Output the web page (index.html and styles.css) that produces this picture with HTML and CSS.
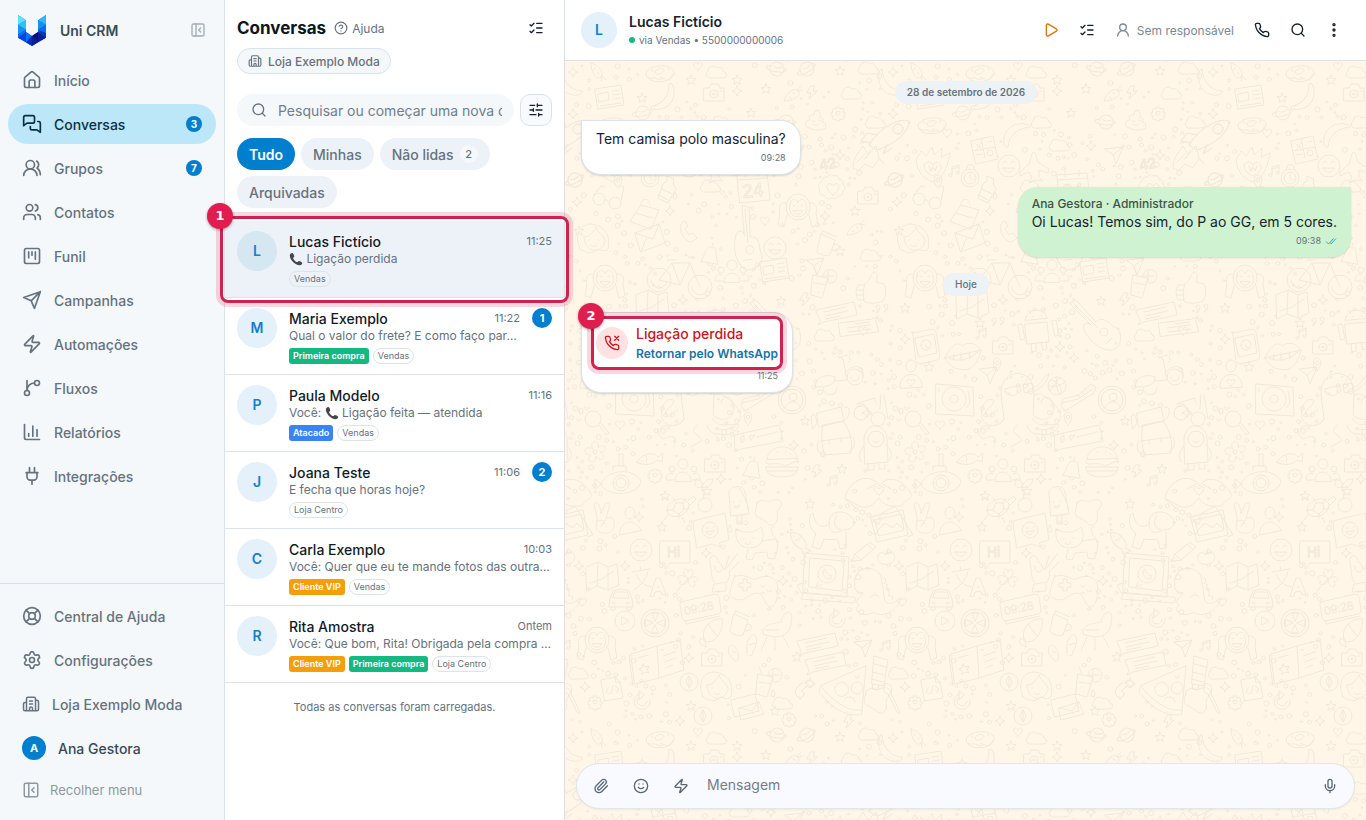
FILE: index.html
```
<!DOCTYPE html>
<html lang="pt-BR">
<head>
<meta charset="utf-8">
<meta name="viewport" content="width=device-width, initial-scale=1">
<title>Uni CRM</title>
<link rel="stylesheet" href="styles.css">
</head>
<body>
<svg class="sprite" aria-hidden="true">
  <symbol id="i-home" viewBox="0 0 24 24"><path d="M15.500 21v-7a2 2 0 0 0-2-2h-3a2 2 0 0 0-2 2v7"/><path d="M3 10a2 2 0 0 1 .709-1.528l7-5.999a2 2 0 0 1 2.582 0l7 5.999A2 2 0 0 1 21 10v9a2 2 0 0 1-2 2H5a2 2 0 0 1-2-2z"/></symbol>
  <symbol id="i-chats" viewBox="0 0 24 24"><path d="M15 9a2 2 0 0 1-2 2H6l-4 3V4a2 2 0 0 1 2-2h9a2 2 0 0 1 2 2z"/><path d="M19 9h1a2 2 0 0 1 2 2v11l-4-3h-6a2 2 0 0 1-2-2v-2"/></symbol>
  <symbol id="i-groups" viewBox="0 0 24 24"><path d="M18 21a8 8 0 0 0-16 0"/><circle cx="10" cy="8" r="5"/><path d="M22 20c0-3.370-2-6.500-4-8a5 5 0 0 0-.45-8.300"/></symbol>
  <symbol id="i-users" viewBox="0 0 24 24"><path d="M16 21v-2a4 4 0 0 0-4-4H6a4 4 0 0 0-4 4v2"/><circle cx="9" cy="7" r="4"/><path d="M22 21v-2a4 4 0 0 0-3-3.870M16 3.130a4 4 0 0 1 0 7.750"/></symbol>
  <symbol id="i-kanban" viewBox="0 0 24 24"><rect x="3" y="3" width="18" height="18" rx="2"/><path d="M8 7v7M12 7v4M16 7v9"/></symbol>
  <symbol id="i-send" viewBox="0 0 24 24"><path d="m22 2-7 20-4-9-9-4ZM22 2 11 13"/></symbol>
  <symbol id="i-zap" viewBox="0 0 24 24"><path d="M4 14a1 1 0 0 1-.78-1.630l9.900-10.200a.5.5 0 0 1 .86.46l-1.920 6.020A1 1 0 0 0 13 10h7a1 1 0 0 1 .78 1.630l-9.900 10.200a.5.5 0 0 1-.86-.46l1.920-6.020A1 1 0 0 0 11 14z"/></symbol>
  <symbol id="i-branch" viewBox="0 0 24 24"><path d="M6 3v12"/><circle cx="18" cy="6" r="3"/><circle cx="6" cy="18" r="3"/><path d="M15 6a9 9 0 0 0-9 9"/></symbol>
  <symbol id="i-chart" viewBox="0 0 24 24"><path d="M3 3v16a2 2 0 0 0 2 2h16M18 17V9M13 17V5M8 17v-3"/></symbol>
  <symbol id="i-plug" viewBox="0 0 24 24"><path d="M12 22v-5M9 8V2M15 8V2M5 8h14M18 8v5a4 4 0 0 1-4 4h-4a4 4 0 0 1-4-4V8Z"/></symbol>
  <symbol id="i-buoy" viewBox="0 0 24 24"><circle cx="12" cy="12" r="10"/><circle cx="12" cy="12" r="4"/><path d="m4.930 4.930 4.240 4.240M14.830 9.170l4.240-4.240M14.830 14.830l4.240 4.240M9.170 14.830l-4.240 4.240"/></symbol>
  <symbol id="i-gear" viewBox="0 0 24 24"><path d="M9.671 4.136a2.340 2.340 0 0 1 4.659 0 2.340 2.340 0 0 0 3.319 1.915 2.340 2.340 0 0 1 2.330 4.033 2.340 2.340 0 0 0 0 3.831 2.340 2.340 0 0 1-2.330 4.033 2.340 2.340 0 0 0-3.319 1.915 2.340 2.340 0 0 1-4.659 0 2.340 2.340 0 0 0-3.320-1.915 2.340 2.340 0 0 1-2.330-4.033 2.340 2.340 0 0 0 0-3.831A2.340 2.340 0 0 1 6.350 6.051a2.340 2.340 0 0 0 3.319-1.915"/><circle cx="12" cy="12" r="3"/></symbol>
  <symbol id="i-store" viewBox="0 0 24 24"><path d="M10 12h4M10 8h4M14 21v-3a2 2 0 0 0-4 0v3M6 10H4a2 2 0 0 0-2 2v7a2 2 0 0 0 2 2h16a2 2 0 0 0 2-2V9a2 2 0 0 0-2-2h-2M6 21V5a2 2 0 0 1 2-2h8a2 2 0 0 1 2 2v16"/></symbol>
  <symbol id="i-panel" viewBox="0 0 24 24"><rect x="3" y="3" width="18" height="18" rx="2"/><path d="M9 3v18M16 15l-3-3 3-3"/></symbol>
  <symbol id="i-help" viewBox="0 0 24 24"><circle cx="12" cy="12" r="10"/><path d="M9.090 9a3 3 0 0 1 5.830 1c0 2-3 3-3 3M12 17h.01"/></symbol>
  <symbol id="i-checks" viewBox="0 0 24 24"><path d="M13 5h8M13 12h8M13 19h8M3 17l2 2 4-4M3 7l2 2 4-4"/></symbol>
  <symbol id="i-search" viewBox="0 0 24 24"><circle cx="11" cy="11" r="8"/><path d="m21 21-4.300-4.300"/></symbol>
  <symbol id="i-sliders" viewBox="0 0 24 24"><path d="M10 5H3M12 19H3M14 3v4M16 17v4M21 12h-9M21 19h-5M21 5h-7M8 10v4M8 12H3"/></symbol>
  <symbol id="i-play" viewBox="0 0 24 24"><path d="M5 5a2 2 0 0 1 3.008-1.728l11.997 6.998a2 2 0 0 1 .003 3.458l-12 7A2 2 0 0 1 5 19z"/></symbol>
  <symbol id="i-user" viewBox="0 0 24 24"><circle cx="12" cy="8" r="5"/><path d="M20 21a8 8 0 0 0-16 0"/></symbol>
  <symbol id="i-phone" viewBox="0 0 24 24"><path d="M22 16.920v3a2 2 0 0 1-2.180 2 19.790 19.790 0 0 1-8.630-3.070 19.500 19.500 0 0 1-6-6 19.790 19.790 0 0 1-3.070-8.670A2 2 0 0 1 4.110 2h3a2 2 0 0 1 2 1.720 12.840 12.840 0 0 0 .7 2.810 2 2 0 0 1-.45 2.110L8.090 9.910a16 16 0 0 0 6 6l1.270-1.270a2 2 0 0 1 2.110-.45 12.840 12.840 0 0 0 2.810.7A2 2 0 0 1 22 16.920z"/></symbol>
  <symbol id="i-missed" viewBox="0 0 24 24"><path d="M22 16.920v3a2 2 0 0 1-2.180 2 19.790 19.790 0 0 1-8.630-3.070 19.500 19.500 0 0 1-6-6 19.790 19.790 0 0 1-3.070-8.670A2 2 0 0 1 4.110 2h3a2 2 0 0 1 2 1.720 12.840 12.840 0 0 0 .7 2.810 2 2 0 0 1-.45 2.110L8.090 9.910a16 16 0 0 0 6 6l1.270-1.270a2 2 0 0 1 2.110-.45 12.840 12.840 0 0 0 2.810.7A2 2 0 0 1 22 16.920z"/><path d="m16 2 6 6M22 2l-6 6"/></symbol>
  <symbol id="i-dots" viewBox="0 0 24 24"><circle cx="12" cy="4" r="1"/><circle cx="12" cy="12" r="1"/><circle cx="12" cy="20" r="1"/></symbol>
  <symbol id="i-clip" viewBox="0 0 24 24"><path d="m16 6-8.414 8.586a2 2 0 0 0 2.829 2.829l8.414-8.586a4 4 0 1 0-5.657-5.657l-8.379 8.551a6 6 0 1 0 8.485 8.485l8.379-8.551"/></symbol>
  <symbol id="i-smile" viewBox="0 0 24 24"><circle cx="12" cy="12" r="10"/><path d="M8 14s1.500 2 4 2 4-2 4-2M9 9h.01M15 9h.01"/></symbol>
  <symbol id="i-mic" viewBox="0 0 24 24"><path d="M12 19v3M19 10v2a7 7 0 0 1-14 0v-2"/><rect x="9" y="2" width="6" height="13" rx="3"/></symbol>
  <symbol id="i-ticks" viewBox="0 0 24 16"><path d="m2 9 5 5L17 3M11 13l1 1L22 3"/></symbol>
  <symbol id="i-handset" viewBox="0 0 16 16"><path d="M1 3.500C1.500 1.800 3 .8 4 1.200c1 .5 2 2.800 2 3.800 0 .9-1.400 1.300-1.300 2 .2 1.400 3.100 4.300 4.600 4.500.8.1 1.100-1.200 2-1.200 1.100 0 3.200 1.200 3.700 2.100.4 1-.8 2.500-2.400 2.700C7.500 15.700.2 8.500 1 3.500Z"/></symbol>
</svg>

<div class="app">
  <aside class="sidebar">
    <div class="brand">
      <svg class="logo" viewBox="0 0 84 93" aria-hidden="true">
        <path fill="#0a5fe8" d="M0 0 24 16V51L42 63 60 51V16L84 0V68L42 93 0 68z"/>
        <path fill="#5ce1fb" d="M0 0 24 16 0 30z"/><path fill="#2cc3fa" d="M24 16v28L0 30z"/><path fill="#1592f5" d="M0 30 24 44 0 58z"/><path fill="#0b6cf0" d="M24 44v12L0 68V58z"/>
        <path fill="#0747d8" d="M24 51v31L0 68z"/><path fill="#0a73ff" d="m24 51 18 12-18 19z"/><path fill="#0a2bb4" d="M42 63v30L24 82z"/>
        <path fill="#0a1e96" d="M42 63v30l18-11z"/><path fill="#06107a" d="m60 51-18 12 18 19z"/><path fill="#0a1e9c" d="M60 51v31l24-14z"/><path fill="#0836b8" d="m60 51 24-7v24z"/>
        <path fill="#36b4f8" d="M84 0 60 16l24 14z"/><path fill="#1491f3" d="M60 16v28l24-14z"/><path fill="#0a6cf0" d="m60 44 24-14v24z"/>
      </svg>
      <span class="brand-name">Uni CRM</span>
      <button class="icon-btn collapse" aria-label="Recolher"><svg class="ic s16"><use href="#i-panel"/></svg></button>
    </div>
    <nav class="nav">
      <a class="nav-item" href="#"><svg class="ic s20"><use href="#i-home"/></svg><span>Início</span></a>
      <a class="nav-item active" href="#"><svg class="ic s20"><use href="#i-chats"/></svg><span>Conversas</span><b class="count">3</b></a>
      <a class="nav-item" href="#"><svg class="ic s20"><use href="#i-groups"/></svg><span>Grupos</span><b class="count">7</b></a>
      <a class="nav-item" href="#"><svg class="ic s20"><use href="#i-users"/></svg><span>Contatos</span></a>
      <a class="nav-item" href="#"><svg class="ic s20"><use href="#i-kanban"/></svg><span>Funil</span></a>
      <a class="nav-item" href="#"><svg class="ic s20"><use href="#i-send"/></svg><span>Campanhas</span></a>
      <a class="nav-item" href="#"><svg class="ic s20"><use href="#i-zap"/></svg><span>Automações</span></a>
      <a class="nav-item" href="#"><svg class="ic s20"><use href="#i-branch"/></svg><span>Fluxos</span></a>
      <a class="nav-item" href="#"><svg class="ic s20"><use href="#i-chart"/></svg><span>Relatórios</span></a>
      <a class="nav-item" href="#"><svg class="ic s20"><use href="#i-plug"/></svg><span>Integrações</span></a>
    </nav>
    <div class="nav nav-foot">
      <a class="nav-item" href="#"><svg class="ic s20"><use href="#i-buoy"/></svg><span>Central de Ajuda</span></a>
      <a class="nav-item" href="#"><svg class="ic s20"><use href="#i-gear"/></svg><span>Configurações</span></a>
      <button class="nav-item"><svg class="ic s18"><use href="#i-store"/></svg><span>Loja Exemplo Moda</span></button>
      <button class="nav-item me"><b class="me-avatar">A</b><span>Ana Gestora</span></button>
      <button class="nav-item small"><svg class="ic s18"><use href="#i-panel"/></svg><span>Recolher menu</span></button>
    </div>
  </aside>

  <section class="inbox">
    <header class="inbox-head">
      <div class="title-row">
        <h1>Conversas</h1>
        <a class="help" href="#"><svg class="ic s14"><use href="#i-help"/></svg>Ajuda</a>
        <button class="icon-btn dark" aria-label="Selecionar conversas"><svg class="ic s16"><use href="#i-checks"/></svg></button>
      </div>
      <button class="store"><svg class="ic s14"><use href="#i-store"/></svg>Loja Exemplo Moda</button>
      <div class="search-row">
        <label class="search"><svg class="ic s16"><use href="#i-search"/></svg><input type="text" aria-label="Pesquisar" placeholder="Pesquisar ou começar uma nova conversa"></label>
        <button class="filter" aria-label="Filtros"><svg class="ic s16"><use href="#i-sliders"/></svg></button>
      </div>
      <div class="chips">
        <button class="chip on">Tudo</button>
        <button class="chip">Minhas</button>
        <button class="chip">Não lidas<span class="chip-n">2</span></button>
        <button class="chip">Arquivadas</button>
      </div>
    </header>

    <div class="threads">
      <a class="thread selected" href="#">
        <span class="avatar">L</span>
        <span class="thread-main">
          <span class="line"><strong>Lucas Fictício</strong><time>11:25</time></span>
          <span class="preview"><svg class="handset"><use href="#i-handset"/></svg> Ligação perdida</span>
          <span class="tags"><span class="tag">Vendas</span></span>
        </span>
        <span class="mark" aria-hidden="true"><b>1</b></span>
      </a>
      <a class="thread" href="#">
        <span class="avatar">M</span>
        <span class="thread-main">
          <span class="line"><strong>Maria Exemplo</strong><time>11:22</time></span>
          <span class="preview">Qual o valor do frete? E como faço par…</span>
          <span class="tags"><span class="tag green">Primeira compra</span><span class="tag">Vendas</span></span>
        </span>
        <b class="unread">1</b>
      </a>
      <a class="thread" href="#">
        <span class="avatar">P</span>
        <span class="thread-main">
          <span class="line"><strong>Paula Modelo</strong><time>11:16</time></span>
          <span class="preview">Você: <svg class="handset"><use href="#i-handset"/></svg> Ligação feita — atendida</span>
          <span class="tags"><span class="tag blue">Atacado</span><span class="tag">Vendas</span></span>
        </span>
      </a>
      <a class="thread" href="#">
        <span class="avatar">J</span>
        <span class="thread-main">
          <span class="line"><strong>Joana Teste</strong><time>11:06</time></span>
          <span class="preview">E fecha que horas hoje?</span>
          <span class="tags"><span class="tag">Loja Centro</span></span>
        </span>
        <b class="unread">2</b>
      </a>
      <a class="thread" href="#">
        <span class="avatar">C</span>
        <span class="thread-main">
          <span class="line"><strong>Carla Exemplo</strong><time>10:03</time></span>
          <span class="preview">Você: Quer que eu te mande fotos das outra…</span>
          <span class="tags"><span class="tag amber">Cliente VIP</span><span class="tag">Vendas</span></span>
        </span>
      </a>
      <a class="thread" href="#">
        <span class="avatar">R</span>
        <span class="thread-main">
          <span class="line"><strong>Rita Amostra</strong><time>Ontem</time></span>
          <span class="preview">Você: Que bom, Rita! Obrigada pela compra …</span>
          <span class="tags"><span class="tag amber">Cliente VIP</span><span class="tag green">Primeira compra</span><span class="tag">Loja Centro</span></span>
        </span>
      </a>
    </div>
    <p class="list-end">Todas as conversas foram carregadas.</p>
  </section>

  <main class="chat">
    <header class="chat-head">
      <span class="avatar sm">L</span>
      <div class="who"><h2>Lucas Fictício</h2><p><i class="dot"></i>via Vendas • 5500000000006</p></div>
      <div class="actions">
        <button class="icon-btn orange" aria-label="Iniciar"><svg class="ic s16"><use href="#i-play"/></svg></button>
        <button class="icon-btn dark" aria-label="Tarefas"><svg class="ic s16"><use href="#i-checks"/></svg></button>
        <button class="assignee"><svg class="ic s16"><use href="#i-user"/></svg>Sem responsável</button>
        <button class="icon-btn dark" aria-label="Ligar"><svg class="ic s16"><use href="#i-phone"/></svg></button>
        <button class="icon-btn dark" aria-label="Buscar"><svg class="ic s16"><use href="#i-search"/></svg></button>
        <button class="icon-btn dark" aria-label="Mais opções"><svg class="ic s16 bold"><use href="#i-dots"/></svg></button>
      </div>
    </header>
    <div class="chat-body">
      <svg class="wallpaper" aria-hidden="true"><defs><pattern id="doodles" width="320" height="666" patternUnits="userSpaceOnUse"></pattern></defs><rect width="100%" height="100%" fill="url(#doodles)"/></svg>
      <div class="stream">
        <span class="day">28 de setembro de 2026</span>
        <article class="bubble in">
          <p>Tem camisa polo masculina?</p>
          <time>09:28</time>
        </article>
        <article class="bubble out">
          <h3>Ana Gestora · Administrador</h3>
          <p>Oi Lucas! Temos sim, do P ao GG, em 5 cores.</p>
          <time>09:38<svg class="ticks"><use href="#i-ticks"/></svg></time>
        </article>
        <span class="day light">Hoje</span>
        <article class="bubble in call-bubble">
          <div class="call">
            <span class="call-icon"><svg class="ic s16"><use href="#i-missed"/></svg></span>
            <div class="call-text"><strong>Ligação perdida</strong><a href="#">Retornar pelo WhatsApp</a></div>
            <span class="mark" aria-hidden="true"><b>2</b></span>
          </div>
          <time>11:25</time>
        </article>
      </div>
      <form class="composer">
        <button type="button" class="icon-btn" aria-label="Anexar"><svg class="ic s16"><use href="#i-clip"/></svg></button>
        <button type="button" class="icon-btn" aria-label="Emoji"><svg class="ic s16"><use href="#i-smile"/></svg></button>
        <button type="button" class="icon-btn" aria-label="Respostas rápidas"><svg class="ic s16"><use href="#i-zap"/></svg></button>
        <input type="text" aria-label="Mensagem" placeholder="Mensagem">
        <button type="button" class="icon-btn" aria-label="Gravar áudio"><svg class="ic s16"><use href="#i-mic"/></svg></button>
      </form>
    </div>
  </main>
</div>
<script src="wallpaper.js"></script>
</body>
</html>
```
FILE: styles.css
```
* { box-sizing: border-box; }
body {
  margin: 0;
  font-family: Inter, "Liberation Sans", sans-serif;
  font-size: 14px;
  color: #16232f;
  background: #fff;
}
h1, h2, h3, p { margin: 0; }
a { color: inherit; text-decoration: none; }
button { border: 0; background: none; padding: 0; font: inherit; color: inherit; cursor: pointer; }
input { font: inherit; border: 0; background: none; outline: 0; padding: 0; min-width: 0; }
.sprite { position: absolute; width: 0; height: 0; }
.ic { flex: none; fill: none; stroke: currentColor; stroke-width: 2; stroke-linecap: round; stroke-linejoin: round; }
.s14 { width: 14px; height: 14px; }
.s16 { width: 16px; height: 16px; }
.s18 { width: 18px; height: 18px; }
.s20 { width: 20px; height: 20px; }
.bold { stroke-width: 3; }

.app { display: grid; grid-template-columns: 225px 340px minmax(0, 1fr); height: 100vh; }

/* Sidebar */
.sidebar { display: flex; flex-direction: column; background: #f4f8fa; border-right: 1px solid #d8e2e8; color: #66727e; }
.brand { display: flex; align-items: center; height: 60px; padding: 0 18px; gap: 14px; }
.logo { width: 28px; height: 31px; }
.brand-name { font-weight: 600; color: #3d4a57; }
.icon-btn { display: grid; place-items: center; color: #5b6774; }
.collapse { margin-left: auto; color: #a3acb5; }
.nav { display: flex; flex-direction: column; gap: 4px; padding: 0 8px; }
.nav-item { display: flex; align-items: center; gap: 12px; height: 40px; padding: 0 14px; border-radius: 20px; font-weight: 500; }
.nav-item.active { background: #bce7f8; color: #0b3044; }
.count { margin-left: auto; width: 16px; height: 16px; border-radius: 50%; background: #007fce; color: #fff; font-size: 10px; line-height: 16px; text-align: center; }
.nav-foot { margin-top: auto; padding-top: 12px; padding-bottom: 12px; border-top: 1px solid #d5e0ea; }
.me { color: #3a4855; }
.me-avatar { width: 24px; height: 24px; border-radius: 50%; background: #007fce; color: #fff; font-size: 11px; line-height: 24px; text-align: center; }
.nav-item.small { height: 36px; gap: 10px; font-size: 13px; color: #8e98a2; font-weight: 400; }

/* Conversation list */
.inbox { display: flex; flex-direction: column; border-right: 1px solid #d8e2e8; min-width: 0; }
.inbox-head { padding: 16px 12px 13px; }
.title-row { display: flex; align-items: center; height: 24px; gap: 8px; }
h1 { font-size: 17px; line-height: 24px; font-weight: 700; color: #0d1620; }
.help { display: flex; align-items: center; gap: 4px; font-size: 12px; color: #66727e; margin-right: auto; }
.title-row .icon-btn { width: 32px; }
.dark { color: #16202b; }
.store { display: flex; align-items: center; gap: 6px; height: 26px; margin-top: 8px; padding: 0 10px; border: 1px solid #d6e3ea; border-radius: 13px; background: #f4f8fa; font-size: 12px; font-weight: 500; color: #66727e; }
.search-row { display: flex; gap: 6px; margin-top: 20px; }
.search { flex: 1; min-width: 0; display: flex; align-items: center; gap: 11px; height: 32px; padding: 0 12px 0 14px; border-radius: 16px; background: #f4f8fa; color: #66727e; }
.search input { flex: 1; }
input::placeholder { color: #737e8a; opacity: 1; }
.filter { width: 32px; height: 32px; display: grid; place-items: center; border: 1px solid #dbe2ec; border-radius: 10px; background: #f8faff; color: #16202b; }
.chips { display: flex; flex-wrap: wrap; gap: 6px; margin-top: 12px; }
.chip { display: flex; align-items: center; gap: 6px; height: 32px; padding: 0 12px; border-radius: 16px; background: #edf2f8; font-weight: 500; color: #66727e; }
.chip.on { background: #007fce; color: #fff; font-weight: 600; }
.chip-n { width: 18px; height: 18px; border-radius: 50%; background: #f6f9fc; font-size: 11px; line-height: 18px; }
.thread { position: relative; display: flex; gap: 12px; padding: 10px 12px 9px; border-bottom: 1px solid #dbe4ea; }
.thread.selected { background: #edf2f8; z-index: 2; }
.avatar { flex: none; width: 40px; height: 40px; border-radius: 50%; background: #e4f1fa; color: #1580c8; font-weight: 600; line-height: 40px; text-align: center; }
.selected .avatar { background: #d5e7f1; }
.avatar.sm { width: 36px; height: 36px; line-height: 36px; }
.thread-main { flex: 1; min-width: 0; display: flex; flex-direction: column; }
.line { display: flex; justify-content: space-between; align-items: center; height: 20px; }
.line strong { font-weight: 500; color: #0f1b26; }
time { font-size: 11px; color: #66727e; }
.preview { font-size: 12px; line-height: 16px; color: #66727e; white-space: nowrap; }
.handset { width: 14px; height: 14px; fill: #45484b; vertical-align: -3px; }
.tags { display: flex; gap: 4px; margin-top: 4px; }
.tag { height: 16px; padding: 0 4px; border: 1px solid #dbe4ea; border-radius: 8px; background: #fff; font-size: 9px; line-height: 14px; color: #66727e; }
.selected .tag { background: none; }
.tag.green, .tag.blue, .tag.amber { border: 0; border-radius: 3px; line-height: 16px; color: #fff; font-weight: 600; }
.tag.green { background: #13b981; }
.tag.blue { background: #3b82f6; }
.tag.amber { background: #f59e0b; }
.thread { min-height: 77px; }
.unread { flex: none; width: 20px; height: 20px; border-radius: 50%; background: #007fce; color: #fff; font-size: 11px; line-height: 20px; text-align: center; }
.list-end { padding: 16px 12px; font-size: 11px; line-height: 17px; text-align: center; color: #66727e; }

/* Step markers drawn over the element they point at */
.mark { position: absolute; inset: -5px; border: 3px solid #cf234f; border-radius: 8px; box-shadow: 0 0 0 4px rgba(225, 29, 82, .18); pointer-events: none; z-index: 3; }
.thread .mark { bottom: -6px; }
.mark b { position: absolute; top: -16px; left: -16px; width: 26px; height: 26px; border-radius: 50%; background: #e11d50; color: #fff; font: bold 13px/26px "DejaVu Sans", sans-serif; text-align: center; box-shadow: 0 1px 3px rgba(0, 0, 0, .35); }

/* Chat */
.chat { display: flex; flex-direction: column; min-width: 0; }
.chat-head { display: flex; align-items: center; gap: 12px; height: 61px; padding: 0 16px; border-bottom: 1px solid #dbe4ea; }
.who h2 { font-size: 14px; line-height: 20px; font-weight: 600; }
.who p { display: flex; align-items: center; gap: 4px; font-size: 10px; line-height: 16px; color: #66727e; }
.dot { width: 6px; height: 6px; border-radius: 50%; background: #13b981; }
.actions { display: flex; align-items: center; gap: 4px; margin-left: auto; }
.actions .icon-btn { width: 32px; height: 32px; }
.orange { color: #d9770c; }
.assignee { display: flex; align-items: center; gap: 6px; padding: 0 8px; font-size: 12px; color: #7c8894; }
.chat-body { position: relative; flex: 1; display: flex; flex-direction: column; background: #fff6e8; }
.wallpaper { position: absolute; inset: 0; width: 100%; height: 100%; }
.wallpaper text { font-family: "Liberation Sans", sans-serif; }
.stream { position: relative; flex: 1; display: flex; flex-direction: column; padding: 20px 15px 0 16px; }
.day { align-self: center; padding: 0 12px; border-radius: 12px; background: #edf2f6; font-size: 10px; line-height: 23px; font-weight: 600; color: #66727e; }
.day.light { font-weight: 500; margin: 16px 0; }
.bubble { display: flex; flex-direction: column; border-radius: 20px; padding: 8px 14px; box-shadow: 0 1px 2px rgba(30, 60, 90, .18); }
.bubble.in { align-self: flex-start; background: #fff; border: 1px solid #dbe4ea; border-top-left-radius: 0; margin-top: 16px; }
.bubble.out { align-self: flex-end; background: #cff2d0; border-top-right-radius: 0; margin-top: 12px; }
.bubble p { font-size: 14px; line-height: 20px; }
.bubble h3 { font-size: 12px; line-height: 17px; font-weight: 500; color: #3d5347; }
.bubble time { align-self: flex-end; display: flex; align-items: center; gap: 4px; font-size: 9px; line-height: 17px; }
.ticks { width: 12px; height: 8px; fill: none; stroke: #2fa5cf; stroke-width: 2; }
.bubble.call-bubble { margin-top: 0; }
.call { position: relative; display: flex; align-items: center; gap: 8px; height: 44px; margin-bottom: 2px; }
.call-icon { display: grid; place-items: center; width: 32px; height: 32px; border-radius: 50%; background: #fee2e2; color: #cb1620; }
.call-text { display: flex; flex-direction: column; }
.call-text strong { font-size: 14px; line-height: 22px; font-weight: 500; color: #cb1620; }
.call-text a { font-size: 12px; line-height: 18px; font-weight: 600; color: #1873a5; }
.composer { position: relative; display: flex; align-items: center; height: 44px; margin: 0 12px 12px; padding: 0 16px; gap: 24px; border-radius: 22px; background: #f8faff; box-shadow: 0 0 0 1px #e0e7ea, 0 1px 3px rgba(30, 60, 90, .15); }
.composer input { flex: 1; margin-left: -6px; padding-bottom: 3px; }
```
FILE: wallpaper.js
```
(function () {
  // Outline drawings, each centred on 0,0
  var shapes = {
    star: 'M0-5 1.500-1.600 5-1.500 2.200.9 3.200 4.500 0 2.400-3.200 4.500-2.200.9-5-1.500-1.500-1.600Z',
    spark: 'M0-5Q.6-.6 5 0 .6.6 0 5-.6.6-5 0-.6-.6 0-5Z',
    cloud: 'M-7 5a4 4 0 0 1-1-7 5 5 0 0 1 9-3 5 5 0 0 1 7 4 3 3 0 0 1-1 6Z',
    heart: 'M0 4C-9-2-2-7 0-2 2-7 9-2 0 4Z',
    bolt: 'M-1-6 3-6 1-1H5L-3 7-1 1H-5Z',
    gear: 'M-1.500-6h3l.5 2 2-1 2 2-1 2 2 .5v3l-2 .5 1 2-2 2-2-1-.5 2h-3l-.5-2-2 1-2-2 1-2-2-.5v-3l2-.5-1-2 2-2 2 1ZM-2 0a2 2 0 1 0 4 0 2 2 0 1 0-4 0',
    planet: 'M-7 0a7 7 0 0 1 14 0 7 7 0 0 1-14 0M-7-1c-8 2-3 6 7 4s11-6 7-6M-4-2c2 2 5 1 8-1',
    donut: 'M-14 1c0-9 26-12 28-2S-12 14-14 1ZM-5-1c1-4 8-5 9-2S-5 4-5-1ZM-12 4c4 3 6-1 9 2s7-3 9 0 6-3 7-5M-9-3l2 1M8-5l1 2M0 5l2-1',
    banana: 'M-8-14C-6 2 2 7 12 8c2 3-4 5-9 4C-9 10-14-2-10-13Z',
    camera: 'M-10-5h5l2-4h7l2 4h4v13h-20ZM-4 1a4 4 0 1 0 8 0 4 4 0 1 0-8 0M-1 1a1 1 0 1 0 2 0 1 1 0 1 0-2 0M6-2h2',
    news: 'M-15-8 11-12 14 8-12 12ZM-12-3-2-5-1 3-11 5ZM2-6 9-7M3-2 10-3M3 2 10 1M-10 9 11 6',
    carrot: 'M-8 6C-6-2 2-8 6-4S2 6-8 6ZM5-5 9-9M6-4l4-1M-3 2l2 1M1-2l2 1',
    poop: 'M-9 9c-4-4 0-7 3-7-3-5 2-5 4-5 0-3 1-5 4-5 1 3 4 5 1 7 4 0 5 3 3 5 4 0 5 6 2 7Q0 14-9 9ZM-3 3a1 1 0 1 0 2 0M3 2a1 1 0 1 0 2 0M-3 6q4 3 6 0',
    rocket: 'M-20 10C-12-4 8-18 20-14 20-2 4 10-12 15ZM4-6a5 5 0 1 0 10 0 5 5 0 1 0-10 0M-12 0-22-2l-6 8 10 2M-2 10l-4 9 9-6M-18 16l-6 8',
    calc: 'M-13-9 9-14 14 9-8 14ZM-8-6l5 4M-3-7l-4 6M4-8l4-1M-8 5l6-1M3 3a3 3 0 1 0 6 0 3 3 0 1 0-6 0M1 8-3-12M-11 1 11-3',
    smiley: 'M-11 0a11 11 0 1 0 22 0 11 11 0 1 0-22 0M-6-3q2-4 4 0M2-3q2-4 4 0M-6 2H6Q0 11-6 2Z',
    plane: 'M-3-14c4 0 3 7 5 10L13 3l-1 4-9-3 0 7 4 4-8-1-6 3 3-6-3-5-9 4 0-4 9-8Z',
    paper: 'M-9-6 9-8 2 9-1 0ZM-1 0 9-8',
    cal: 'M-16-13 14-15 17 12-13 15ZM-8-17v6M6-18v6M-15-8 14-10',
    bird: 'M-14 10C-14-2-6-8-4-12L1-4l8-8 3 12-6 10-8-4-6 6ZM-10 4l8-8M12 0l5 6',
    fire: 'M-16 2c-3-9 3-9 4-14l5 5 6-9 2 8 8-7-1 9 9-4C14 8 8 16 0 19c-8-3-14-8-16-17ZM-9 2c3-6 9-2 9 0 3-5 9-2 8 3S2 12 0 13C-4 11-9 8-9 2ZM-4 3l2 5 2-4 2 4 2-5',
    cookie: 'M-14 0q-2-4 3-6 0-5 5-5 3-4 6-1 5-2 6 3 5 1 4 5 4 4 0 7 0 5-5 5-2 4-6 2-5 3-7-2-6 0-6-8ZM0 7C-12-2-3-8 0-2 3-8 12-2 0 7Z',
    watch: 'M-9 0a9 9 0 1 0 18 0 9 9 0 1 0-18 0M-6 0a6 6 0 1 0 12 0 6 6 0 1 0-12 0M0-4V0l3 2M-4-8-2-13H3L5-8',
    bottle: 'M0-14l7 3-1 5 3 5-8 14-10-5 5-14 4-3ZM-5-1l10 5M-8 5l9 5',
    monkey: 'M-12 0a12 13 0 0 1 24 0 12 13 0 0 1-24 0M-8-2c0-8 8-6 8-2 0-4 8-6 8 2 4 16-20 16-16 0ZM-5-2a1 1 0 1 0 2 0M3-2a1 1 0 1 0 2 0M-5 4q5 7 10 0ZM-12-4c-6-1-8 5-6 10l-2 12 6 2 3-12M12-4c6-1 8 5 6 10l2 12-6 2-3-12',
    glasses: 'M-14 2a6 6 0 1 0 12 0 6 6 0 1 0-12 0M2 6a6 6 0 1 0 12 0 6 6 0 1 0-12 0M-2 2l4 3M-13-2-6-11l4 1M14 4l3-14-5-1',
    bag: 'M-15 8-4-8 14-3 6 16ZM-4-8c-1-6 8-9 9 0M-10 0l18 5',
    mail: 'M-14-4 10-13 16 6-8 15ZM-14-4 4 2 10-13M-8 15-2 0',
    phone: 'M-8-9c-5 4 2 20 10 19l5-4-4-5-4 2-4-6 3-3-3-5Z',
    bike: 'M-33 3a12 12 0 1 0 24 0 12 12 0 1 0-24 0M8 10a12 12 0 1 0 24 0 12 12 0 1 0-24 0M-29 3a8 8 0 1 0 16 0M12 10a8 8 0 1 0 16 0M-21 3-8-14H10L20 10M-8-14 0 8 10-14M-21 3 0 8M-13-17h9M8-20h7',
    people: 'M-5-8a5 5 0 1 0 10 0 5 5 0 1 0-10 0M-8 9c0-12 16-12 16 0ZM-14-3a3 3 0 1 0 6 0 3 3 0 1 0-6 0M8-3a3 3 0 1 0 6 0 3 3 0 1 0-6 0M-9 8h-8c0-6 4-8 7-6M9 8h8c0-6-4-8-7-6',
    drink: 'M-9-8 6-5 0 15-11 12ZM-8 0 4 2M1-6a7 7 0 1 1 5 6M6-13v12M1-7H13M-5-8-8-15M-6 5h1M-4 9h1',
    thumb: 'M-5-3C0-6 1-14 4-15c5 0 3 8 2 10l8 2c3 3 2 13-1 17-6 3-16 3-19 0Q-8 4-5-3ZM-6-2h-6q-4 8 0 15h6M-13 3h7M-13 8h7',
    map: 'M-16-10-4-15 6-10 15-13 17 8 6 13-5 9-15 14ZM-4-15-5 9M6-10V13M-12 6 0 2l12-8',
    droid: 'M-12-12c2-13 20-13 22-2ZM-9-22l3 4M8-24l-3 4M-12-8 10-10 12 10-10 12ZM-19-7l4-1 3 15-4 1ZM15-11l4-1 3 15-4 1ZM-6 12l1 8 4-1V11M4 10l2 8 4-1-1-7M-5-15h1M4-16h1',
    guitar: 'M-26-27-20-30 0-8C8-16 14-4 20-2 28 2 26 22 12 20 4 19-6 12-12 0-14-8-8-8-5-5L-24-24ZM4 2a4 4 0 1 0 8 0 4 4 0 1 0-8 0M10 14l6-6M-22-26 2-2',
    note: 'M-20-2 18-10 21 3-12 10-18 13-16 9ZM-12 0 10-5M-11 4 12-1M-10 7 4 4',
    mobile: 'M-13-14 6-18 Q9-18 10-15L14 9Q14 12 11 13L-6 17Q-9 17-10 14ZM-11-9 8-13 11 6-7 10ZM-5-2a5 5 0 1 0 10 0 5 5 0 1 0-10 0M-1-2l1 2 3 1',
    lips: 'M-18 3C-12-10-6-14-1-9 6-14 12-12 18-5 14 12 6 17-4 14-10 13-14 10-18 3ZM-18 3C-8 0 8-2 18-5M-9-1l-1 6M-2-2v7M6-3l1 6M-14 3Q0 10 15-3',
    scooter: 'M-24 10c0-10 12-14 20-10 0 8-6 10-20 10ZM-16 11a7 7 0 1 0 14 0M8 0a8 8 0 1 0 16 0 8 8 0 1 0-16 0M12 0a4 4 0 1 0 8 0M-4 4 8 3 4-18-2-21M0-19l7-3c6 0 4 8 2 8M8-6c10-10 18-2 16 6',
    person: 'M-5-11a5 6 0 1 0 10 0 5 6 0 1 0-10 0M-11 11C-13-6 12-8 11 10ZM0 9C-8 3-2 0 0 4 2 0 8 3 0 9Z',
    deck: 'M-19-15 18-12 19 17-19 15ZM-13 0a12 12 0 1 0 24 0 12 12 0 1 0-24 0M-5 0a4 4 0 1 0 8 0 4 4 0 1 0-8 0M13-8l2 12-4 5M-16-11v4',
    octopus: 'M-18-18C-20-46 16-48 15-18L14 2c8 8 20 4 20-4 4-12-10-20-12-8M14-26c8 0 8-8 16-14-2 10-6 14-14 18M15-18c8-4 18 6 26 16 4 12-12 22-22 18M-18-18l3 24c-6 10-20 8-22-2-3-12 8-22 12-16-4 10-10 8-8 14 2 4 8-2 12-6M-15 6c-6 12-22 2-26 12 0 6 6 8 6 8 10-6 14 0 10 8M14 6c4 10 18 4 26 6-4 10-14 12-24 8M-2 12c-10 10 4 8 4 16l-10 6M8 12c2 10 12 8 12 16M-14-24 0-28l2 6-8 5-7-3ZM4-28l9-2 1 8-8 2ZM-12-34h1M2-36h2M7-33h1',
    ball: 'M-9 0a9 9 0 1 0 18 0 9 9 0 1 0-18 0M-9 0Q0 2 8-4M0-9Q-3 0 3 8M-6-6Q4-4 5 7M-7 5Q-2-2 3-8',
    shoe: 'M-18 8-16 2 0-2 12-13l5 3-2 6L-14 14ZM-17 6-1 2 14-8M-2-3l3 3M2-6l3 3M5-9l3 3',
    badge: 'M-14 0a14 14 0 1 0 28 0 14 14 0 1 0-28 0M-11 0a11 11 0 1 0 22 0 11 11 0 1 0-22 0M-3-3a4 4 0 1 0 8 0 4 4 0 1 0-8 0M-7 8C-6 0 7 0 8 7',
    voice: 'M-24-2 20-12 24 4-18 12-24 14ZM-18 0v5h3V-1ZM-9-1-4-2-8 3ZM-2 0 18-5',
    pack: 'M-10-8 10-12C18-2 20 12 18 20L-8 22C-12 12-12 0-10-8ZM-16-20 8-26 11-12-14-6ZM-22-16q4-8 6 6l-4 6ZM11-26q8-2 4 10l-4 4M-12 8 18 4M-14 8c-4 8 0 14 6 14M20 4c4 8 0 12-4 14M-4 6v5M8 4v5',
    binoc: 'M-15 6a7 7 0 1 0 14 0 7 7 0 1 0-14 0M2 12a7 7 0 1 0 14 0 7 7 0 1 0-14 0M-14 2C-6-8 0 0 2 8M-12-3 5-9l2 5M15-12l4 24M12-13l-1 15',
    lens: 'M-8 2a8 8 0 1 0 16 0 8 8 0 1 0-16 0M6 8l7 10 3-2-8-10M-14-6a2 3 0 1 0 4 0 2 3 0 1 0-4 0M-8-10a2 3 0 1 0 4 0M-16 2a2 2 0 1 0 4 0',
    astro: 'M-11-10C-10-26 10-26 12-10L13 14-10 16ZM-7-9a8 8 0 1 0 16 0 8 8 0 1 0-16 0M-11-2c-6 6-6 14-2 16M12-2c6 6 6 12 2 14M-7 16v6h6V17M4 16v5h6V16M-2-7q3 3 6 0',
    flower: 'M-2-3c-6-8 8-11 5-1 6-7 12 4 2 4 9 6-1 11-4 4 0 10-12 6-5-1-10 0-7-11 2-6M-2 0a2 2 0 1 0 4 0 2 2 0 1 0-4 0',
    sub: 'M-20 2C-14-14 14-14 20-1 18 14-14 16-20 2ZM-8 1a8 8 0 1 0 16 0 8 8 0 1 0-16 0M-5 1a5 5 0 1 0 10 0 5 5 0 1 0-10 0M-8-11v-5h13v5M-2-16v-12h4v12M-20 2l-6-5v10Z',
    hands: 'M-34 6C-30-14-8-20 0-6 10-20 28-10 33 4L22 14C8 16 2 10 0 6-6 12-10 18-20 14ZM0 3C-10-4-3-9 0-3 3-9 10-4 0 3M-33 8l10 8M-12-3-3-8M12-3 4-8',
    fish: 'M-12 4C-6-6 6-6 9-1l5-4-1 9-5-2C4 7-6 8-12 4ZM-8 3h1M-3-2q2 4 0 6M-12 4l4 2',
    burger: 'M-15-4C-14-20 14-20 15-5ZM-15-4Q-18 2-10 1T0 2 10 0t6 0L15-5M-16 4H16l-1 4H-15ZM-15 8C-14 16 14 16 15 8M-5-11h1M3-12h1M8-9h1',
    bell: 'M-9 5C-4-1-6-10 3-9 8-6 5 0 8 8ZM-3 7q2 6 6 1M2-10l1-3',
    turtle: 'M-11 3C-12-9 8-14 11-3 10 9-9 13-11 3ZM-5 2-2-5 5-5 6 1 1 6ZM-5 2h-6M-2-5l-3-5M5-5 8-9M6 1h5M1 6v5M10-7q6-8 8-2l-6 6M-10 7l-5 6M4 9l3 6M-9-8l-6-3',
    cherry: 'M-6 8a7 7 0 1 0 14 0 7 7 0 1 0-14 0M0 2-2-10C-12-8-8-14-9-18-3-18-1-14-2-10 0-18 6-18 9-18 8-12 4-8-2-10',
    ice: 'M-10-10C-8-17 4-18 6-10L10 12-8 14ZM-2 14v8h5V13M0-14Q6-6 10 8M-6 0h1M1-1h1M-5 5q4 3 6-1Z',
    blob: 'M-12-9c6-6 8 0 14-2 8-4 14 2 8 8-4 4 0 6-2 12C2 20-4 6-12 5c-4-4 0-8 0-14Z',
    bubble: 'M-18-9 14-17 18 10 8 13l2 4-9-3-15 4ZM-9 0a8 8 0 1 0 16 0 8 8 0 1 0-16 0M-5-2h2M2-3h2M-5 2q4 6 8-1Z',
    cat: 'M-20-14l7 3h10l8-5c4 8 2 18-6 20C-14 8-22-2-20-14ZM-13-4h1M-3-5h1M-11 0q3 4 6-1M6-2l14-2c4 6 0 16-2 20l-6-1-1-6-12 1-3 7-6-1 2-10M20-4C14-10 14-18 18-16',
    dog: 'M-4-4C-4-18 14-18 20-8 24-2 16 4 12 2-2 10-4 2-4-4ZM-4-4C-10 4-18-2-20-14c-6 0-4 18 3 20l-4 14 8 2 4-10 14 1 2 9 6-1V4M4-12C-2-2 4 4 8 2M14-8h1',
    photos: 'M-20-8 12-15 17 10-14 17ZM-16-5 10-11 13 5-12 11ZM-14 6-6-2 2 3 6-2 12 4M-12-10 4-19 22 10 17 12',
    peace: 'M-8 0-11-14c3-4 6 0 7 10L0-14c4-3 5 0 4 4L1 0c10-2 8 4 8 8-2 10-16 9-18 2ZM-9 4C-4 0 0 3 0 6M1 1l-5 7',
    bust: 'M-5-10a5 6 0 1 0 10 0 5 6 0 1 0-10 0M-11 12C-10-2 4-6 11 7Z',
    hi: 'M-15-11H15V11H-5L-10 17V11H-15Z',
    pencil: 'M-12 9-9 2 6-10 12-5-3 8ZM-9 2l6 6M3-8l6 6',
    apple: 'M0-3c-10-6-11 9-3 10 3 1 5 1 8-1C12 2 8-9 0-3ZM0-3l2-6',
    laptop: 'M-22-24 22-20 20 20-24 16ZM-17-19 17-16 15 14-18 10ZM-26 16-30 8l6-2M-24 16-26 22 26 26Q32 20 26 20ZM-9-3a9 9 0 1 0 18 0 9 9 0 1 0-18 0M-9 5l-2 5 5-2M-4-6c0 6 4 8 7 8l2-3-3-1-3-3-1-3Z',
    dino: 'M-20-14c2-14 22-14 26-2l4 24c4 6 10 0 16-2C20 22 4 24-2 19-10 26-24 18-16 12c-6-4 2-8 4-12-4-2-10 2-8-14ZM-13-15h1M8-16l3 3-2 3 4 2-2 4 4 3-2 3 5 2-1 3M-12 0h-6M-4 4q4-5 8 0',
    glyph: 'M-16-10 2-13M-8-16l1 5M-12-8C-8 0-4 4 4 5M0-10C-2-2-8 4-14 8M2 14 8-4h4l6 16-4 1-2-4-5 1-1 4ZM9 5h3',
    clover: 'M0 0C-10-8 0-14 0-7 3-14 10-6 0 0 10-6 13 2 6 3 10 10 0 10 0 0-1 8-12 7-7 2-14 0-8-8 0 0ZM0 0-11 12',
    okhand: 'M-12-2c-4-12 4-18 8-6L2 0 6-14M4-2 14-16M6 2 16-8M-12-2c0 8 2 12 4 16l12-2C6 8 8 4 6 2M-9 14l-2 8 14-1V13M-8-4a4 5 0 1 0 8 2',
    pad: 'M-18-16C-10-22-4-12 4-14c6-4 16-4 20 4 2 14-2 24-6 24-8-2-6-14-14-14-8 0-14 10-22 6-10-2-2-16 0-24ZM-10-10v-4h4v4h4v4h-4v4h-4v-4h-4v-4ZM8-8a2 2 0 1 0 4 0M14-3a2 2 0 1 0 4 0M8 0h4',
    car: 'M-11 0-8-8Q0-12 8-8l3 8 1 8H-12ZM-8-1H8L6-7H-6ZM-9 4h4M5 4h4M-10 8v3h4V8M6 8v3h4V8',
    clock: 'M-19-6 15-14 Q18-14 19-11L21 2 Q21 5 18 6L-14 13Q-17 13-18 10L-20-3ZM-15 13l1 3L20 8',
    play: 'M-10 0a10 10 0 1 0 20 0 10 10 0 1 0-20 0M-3-4 4 0-3 4Z',
    orange: 'M-14 0a14 14 0 1 0 28 0 14 14 0 1 0-28 0M-11 0a11 11 0 1 0 22 0 11 11 0 1 0-22 0M0-2-3-9Q0-11 3-9ZM0 2 3 9Q0 11-3 9ZM2 0 9-3Q11 0 9 3ZM-2 0-9 3Q-11 0-9-3Z',
    cup: 'M-6-9 8-3 3 12Q-4 14-10 9ZM-4-12 10-6M7 1q8 0 3 6-3 2-5 0M-6-9l2-3',
    chair: 'M-14 4C-16-6-4-6 4-8 6-20 18-22 14-8 14 2 8 6-2 7ZM-10 7l-6 14M-2 8v12M6 6l6 12M-12 0h14',
    reload: 'M-3-8A8 8 0 1 0 8-2M-3-5A5 5 0 1 0 5-1M-3-11v9l5-5Z',
    book: 'M-26-8 0-16 23-22 27 8 2 16-22 22ZM0-16 2 16M-26-8-28-6-24 24M-19-4-9-7M4-12h3M6-6 18-10M7 0 19-4M8 6l8-3M-14 2l2 3 4-1-2 4 2 3-4-1-3 3v-4l-3-2 3-1Z',
    acorn: 'M-8 6C-12-6 2-16 10-14 12-6 6 10-6 9ZM-8 6c-6-2-6 4-2 6l4 2ZM-4-9 6 4',
    flip: 'M-14-6c4-6 8 2 9 6 2 8-2 10-5 6-4-4-6-8-4-12ZM-11-2l4 2M4-2c-2-12 6-20 9-14 2 6-2 12-4 18-4 2-6 0-5-4ZM6-8l6-2',
    tube: 'M-6-16 8-12 4 14-8 12ZM-6-8 6-5M-8 0l12 3M-9 7l12 3M-7 12l-1 5 6 1 1-5',
    pizza: 'M19-24 15 20C0 22-16 10-26-4ZM-26-4q-4 4 0 8C-16 18 2 28 15 24V20M-12 -3a7 7 0 1 0 12-2 7 7 0 0 0-12 2M4 -2a6 6 0 1 0 12 0 6 6 0 1 0-12 0M-2 9c4-4 10-2 10 3M8-14a2 2 0 1 0 4 0',
    girl: 'M-13 10c-8-20 6-28 16-24 12 4 14 14 12 24-4 4-10 0-10 0-6 6-12 4-18 0ZM-9-2C-2-2 0-8 3-12 6-4 12-4 12 2 10 14-8 16-9-2ZM-4 1h1M5 1h1M-2 6q3 3 6 0',
    doc: 'M-11-9 3-12 8-7 11 9-7 12ZM3-12l1 6 4-1M-4-1-6 3l3 2M3-3l4 3-2 4M1-3-1 5',
    letters: 'M-16-6 8-12 12 5-12 11ZM-8 2 12-4 17 8-6 14ZM-8 2 5 5 12-4',
    compass: 'M-9 0a9 9 0 1 0 18 0 9 9 0 1 0-18 0M0-6 3 0 0 6-3 0ZM0-6V6',
    brush: 'M-8-14c6-2 8 4 6 10l8 16q2 6-2 2L-5-4c-6-2-4-8-3-10Z',
    pin: 'M0 6C-7-2-3-7 0-7S7-2 0 6ZM-2-2a2 2 0 1 0 4 0 2 2 0 1 0-4 0',
    music: 'M-3 4v-8L4-6V2M-6 4a1.500 1.500 0 1 0 3 0 1.500 1.500 0 1 0-3 0M1 2a1.500 1.500 0 1 0 3 0 1.500 1.500 0 1 0-3 0M-3-2 4-4',
    drop: 'M0-4Q4 3 0 3T0-4Z',
    quote: 'M-6-3a2 2 0 1 1 4 0q0 5-4 6 2-2 2-4a2 2 0 0 1-2-2M2-4a2 2 0 1 1 4 0q0 5-4 6 2-2 2-4a2 2 0 0 1-2-2'
  };
  // name x y [rotation], inside a 320 x 666 tile
  var places =
    'carrot 32 10 90|donut 95 12|cloud 151 12|planet 212 8 20|planet 242 8 -20|banana 5 22|camera 149 32|news 45 36|banana 98 36 -100|cloud 286 33|cloud 303 8|bolt 247 31|carrot 227 34|poop 251 57|gear 273 52|planet 78 52|planet 221 61 15|donut 47 64|cloud 310 62|cloud 156 62|rocket 4 74|rocket 324 74|banana 131 74 90|calc 99 89|smiley 124 105|plane 151 105|cloud 174 85|paper 229 94|bird 302 97|fire 48 102|cookie 268 127|cal 188 127|camera 303 135|planet 10 119 -15|planet 330 119 -15|watch 85 117|bottle 102 129|cloud 145 126|monkey 233 146|glasses 42 136|bag 80 152|mail 84 176|phone 125 171|carrot 290 168|guitar 180 182 40|cup 262 182|girl 28 178|bell 145 195|smiley 210 187|paper 250 205|cloud 305 195|monkey 40 217|bike 115 216|people 167 212|news 210 209|drink 257 222|thumb 305 226|map 87 244|droid 152 271|guitar 211 269|note 271 251|note 294 267 185|mobile 41 286|lips 78 294|camera 118 285|cloud 259 275|scooter 274 316|person 26 316|deck 70 338|octopus 134 352|ball 172 325|shoe 194 336|badge 227 339|voice 194 376|pack 268 372|binoc 304 346|lens 28 356|astro 310 387|flower 30 391|sub 56 421|hands 314 431|fish 84 397|burger 217 402|bell 187 409|camera 150 403|people 118 411|turtle 113 447|cherry 139 436|ice 174 441|blob 204 451|bubble 146 469|cat 191 482|dog 268 466|photos 6 464|peace 40 457|bust 65 462|hi 110 491|smiley 76 489|pencil 299 491|apple 321 496|laptop 262 516|dino 310 532|map 37 516|glyph 83 521|clover 123 518|okhand 158 509|pad 188 532|car 56 538|clock 135 547|play 60 560|orange 90 562|cup 175 562|chair 212 569|reload 272 559|monkey 32 579|book 92 601|acorn 147 572|camera 147 597|flip 178 592|note 252 582|note 260 601|paper 298 587|tube 315 611|pizza 282 629|girl 151 626|doc 47 628|drink 202 621|letters 182 645|cloud 217 643|cloud 13 613|gear 30 641|reload 77 641|compass 138 655|gear 224 658|blob 313 639|brush 8 637|phone 240 630 80|' +
    'star 126 19|star 172 19|star 201 28|star 77 37|star 275 10|star 186 52|star 95 262|star 216 240|star 20 247|star 240 360|star 277 408|star 245 443|star 100 435|star 97 466|star 210 650|star 232 596|star 126 645|star 44 306|star 290 150|star 14 170|star 275 190|star 142 430|' +
    'spark 8 11|spark 172 30|spark 8 53|spark 206 85|spark 275 94|spark 12 141|spark 118 239|spark 175 286|spark 20 278|spark 189 297|spark 229 384|spark 302 352|spark 156 418|spark 74 456|spark 141 492|spark 60 505|spark 14 505|spark 218 520|spark 124 597|spark 20 626|spark 245 622|spark 115 660|spark 105 150|spark 260 155|' +
    'heart 133 5|heart 17 541|heart 55 364|heart 298 270|heart 62 72|heart 200 160|' +
    'bolt 252 410|bolt 284 660|bolt 240 238|music 97 273|music 268 420|music 321 585|music 70 110|pin 53 121|pin 112 304|pin 183 358|drop 110 135|drop 208 633|drop 165 468|quote 113 262|quote 317 249|paper 103 314|gear 90 414|fish 235 480 60|compass 124 621';
  var out = '';
  var taken = [];
  places.split('|').forEach(function (entry) {
    var p = entry.split(' '), x = +p[1], y = +p[2];
    if (!shapes[p[0]]) return;
    var nums = shapes[p[0]].match(/-?\d+/g).map(Number);
    var reach = Math.max.apply(null, nums.map(Math.abs));
    taken.push([x, y, Math.min(reach, 20)]);
    [0, 320, -320].forEach(function (dx) {
      [0, 666, -666].forEach(function (dy) {
        if (x + dx < -40 || x + dx > 360 || y + dy < -40 || y + dy > 706) return;
        out += '<path d="' + shapes[p[0]] + '" transform="translate(' + (x + dx) + ' ' + (y + dy) + ') rotate(' + (p[3] || 0) + ')"/>';
      });
    });
  });
  // Small rings fill the free space between the drawings
  var seed = 7;
  function rnd() { seed = (seed * 16807) % 2147483647; return seed / 2147483647; }
  for (var i = 0, n = 0; i < 12000 && n < 620; i++) {
    var x = 3 + rnd() * 314, y = 3 + rnd() * 660, r = [1, 1.500, 2, 2.500][Math.floor(rnd() * 4)];
    var free = taken.every(function (t) { return Math.hypot(t[0] - x, t[1] - y) > t[2] + r; });
    if (!free) continue;
    taken.push([x, y, r + 2]);
    n++;
    out += '<circle cx="' + x.toFixed(1) + '" cy="' + y.toFixed(1) + '" r="' + r + '"/>';
  }
  out += '<text x="102" y="496" font-size="14">Hi</text>' +
    '<text x="119" y="551" font-size="12" stroke-width="0.6" transform="rotate(-12 135 548)">09:28</text>' +
    '<text x="254" y="108" font-size="15" transform="rotate(-10 263 102)">42</text>' +
    '<text x="177" y="136" font-size="19" transform="rotate(-6 188 128)">24</text>';
  document.getElementById('doodles').innerHTML =
    '<g fill="none" stroke="#f2e8d8" stroke-width="1" stroke-linejoin="round" stroke-linecap="round">' + out + '</g>';
})();
```
